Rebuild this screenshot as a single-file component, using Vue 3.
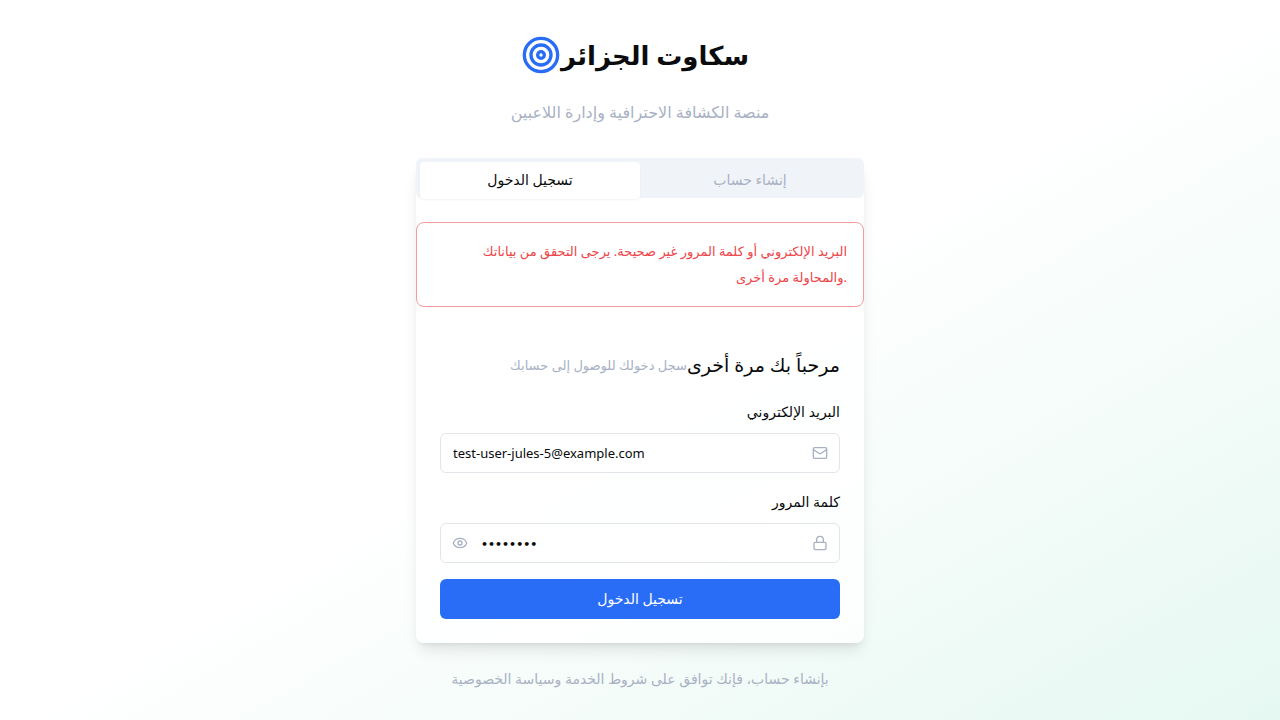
<script setup>
import { ref } from 'vue'

const tab = ref('login')
const email = ref('test-user-jules-5@example.com')
const password = ref('password')
const visible = ref(false)
</script>

<template>
  <main class="page" lang="ar">
    <div class="column">
      <header class="brand">
        <div class="brand-row">
          <svg class="brand-icon" viewBox="0 0 24 24" aria-hidden="true">
            <circle cx="12" cy="12" r="10" />
            <circle cx="12" cy="12" r="6" />
            <circle cx="12" cy="12" r="2" />
          </svg>
          <h1>سكاوت الجزائر</h1>
        </div>
        <p class="tagline" dir="rtl">منصة الكشافة الاحترافية وإدارة اللاعبين</p>
      </header>

      <section class="card">
        <div class="tabs" role="tablist">
          <button type="button" role="tab" class="tab" :class="{ active: tab === 'login' }" :aria-selected="tab === 'login'" @click="tab = 'login'">تسجيل الدخول</button>
          <button type="button" role="tab" class="tab" :class="{ active: tab === 'signup' }" :aria-selected="tab === 'signup'" @click="tab = 'signup'">إنشاء حساب</button>
        </div>

        <p class="alert" role="alert">البريد الإلكتروني أو كلمة المرور غير صحيحة. يرجى التحقق من بياناتك<br />والمحاولة مرة أخرى.</p>

        <form class="form" @submit.prevent>
          <div class="intro" dir="rtl">
            <h2>مرحباً بك مرة أخرى</h2>
            <p>سجل دخولك للوصول إلى حسابك</p>
          </div>

          <div class="field">
            <label for="email">البريد الإلكتروني</label>
            <div class="control">
              <input id="email" v-model="email" type="email" />
              <svg class="icon lead" viewBox="0 0 24 24" aria-hidden="true">
                <rect width="20" height="16" x="2" y="4" rx="2" />
                <path d="m22 7-8.97 5.7a1.94 1.94 0 0 1-2.06 0L2 7" />
              </svg>
            </div>
          </div>

          <div class="field">
            <label for="password">كلمة المرور</label>
            <div class="control">
              <input id="password" v-model="password" class="secret" :type="visible ? 'text' : 'password'" />
              <svg class="icon lead" viewBox="0 0 24 24" aria-hidden="true">
                <rect width="18" height="11" x="3" y="11" rx="2" ry="2" />
                <path d="M7 11V7a5 5 0 0 1 10 0v4" />
              </svg>
              <button type="button" class="reveal" aria-label="إظهار كلمة المرور" @click="visible = !visible">
                <svg class="icon" viewBox="0 0 24 24" aria-hidden="true">
                  <path d="M2.062 12.348a1 1 0 0 1 0-.696 10.75 10.75 0 0 1 19.876 0 1 1 0 0 1 0 .696 10.75 10.75 0 0 1-19.876 0" />
                  <circle cx="12" cy="12" r="3" />
                </svg>
              </button>
            </div>
          </div>

          <button type="submit" class="submit">تسجيل الدخول</button>
        </form>
      </section>

      <p class="terms" dir="rtl">بإنشاء حساب، فإنك توافق على شروط الخدمة وسياسة الخصوصية</p>
    </div>
  </main>
</template>

<style>
body {
  margin: 0;
}
</style>

<style scoped>
* {
  box-sizing: border-box;
}

.page {
  display: flex;
  justify-content: center;
  min-height: 100vh;
  padding: 32px 16px 24px;
  background: linear-gradient(to bottom right, #fff 0%, #fff 50%, #e6f8f2 100%);
  color: #090b0d;
  font-family: "Noto Sans", "DejaVu Sans", sans-serif;
  font-size: 14px;
  line-height: 24px;
}

h1,
h2,
p {
  margin: 0;
}

button,
input {
  font: inherit;
}

button {
  border: 0;
  cursor: pointer;
}

.column {
  width: 100%;
  max-width: 448px;
}

.brand {
  margin-bottom: 32px;
  text-align: center;
}

.brand-row {
  display: flex;
  align-items: center;
  justify-content: center;
  height: 46px;
  padding-right: 10px;
  margin-bottom: 20px;
}

.brand-icon {
  flex: none;
  width: 40px;
  height: 40px;
  fill: none;
  stroke: #296df6;
  stroke-width: 2;
}

h1 {
  font-size: 26px;
  line-height: 46px;
  font-weight: 700;
}

.tagline {
  color: #a8b1c4;
  font-size: 16px;
  line-height: 28px;
}

.card {
  border-radius: 8px;
  background: rgba(255, 255, 255, 0.8);
  box-shadow: 0 10px 15px -3px rgba(0, 0, 0, 0.1), 0 4px 6px -4px rgba(0, 0, 0, 0.1);
}

.tabs {
  display: grid;
  grid-template-columns: 1fr 1fr;
  height: 40px;
  padding: 4px;
  border-radius: 6px;
  background: #f0f4f9;
}

.tab {
  height: 37px;
  padding: 0 12px 2px;
  border-radius: 4px;
  background: transparent;
  color: #a8b1c4;
}

.tab.active {
  background: #fff;
  color: #090b0d;
  box-shadow: 0 1px 2px rgba(0, 0, 0, 0.05);
}

.alert {
  margin-top: 24px;
  padding: 15px 16px 16px;
  border: 1px solid #f59a9d;
  border-radius: 8px;
  background: #fff;
  color: #ee4448;
  font-size: 13px;
  line-height: 26px;
  text-align: right;
}

.form {
  display: flex;
  flex-direction: column;
  gap: 16px;
  padding: 40px 24px 24px;
}

.intro {
  display: flex;
  align-items: center;
  height: 36px;
}

.intro h2 {
  font-size: 19px;
  line-height: 36px;
  font-weight: 400;
}

.intro p {
  color: #a8b1c4;
  font-size: 13px;
}

.field {
  display: flex;
  flex-direction: column;
  gap: 8px;
}

.field label {
  line-height: 26px;
  text-align: right;
}

.control {
  position: relative;
}

.control input {
  display: block;
  width: 100%;
  height: 40px;
  padding: 0 40px 0 12px;
  border: 1px solid #e3e5ea;
  border-radius: 6px;
  background: #fff;
  color: #090b0d;
  font-size: 13px;
}

.control .secret {
  padding-top: 2px;
  padding-left: 40px;
  font-family: "DejaVu Sans", sans-serif;
  font-size: 11px;
  font-weight: 700;
}

.icon {
  display: block;
  width: 16px;
  height: 16px;
  fill: none;
  stroke: #a8b1c4;
  stroke-width: 2;
  stroke-linecap: round;
  stroke-linejoin: round;
}

.lead {
  position: absolute;
  top: 12px;
  right: 12px;
}

.reveal {
  position: absolute;
  top: 12px;
  left: 12px;
  padding: 0;
  background: transparent;
}

.submit {
  height: 40px;
  border-radius: 6px;
  background: #296df6;
  color: #fff;
}

.terms {
  margin-top: 24px;
  color: #a8b1c4;
  text-align: center;
}
</style>
